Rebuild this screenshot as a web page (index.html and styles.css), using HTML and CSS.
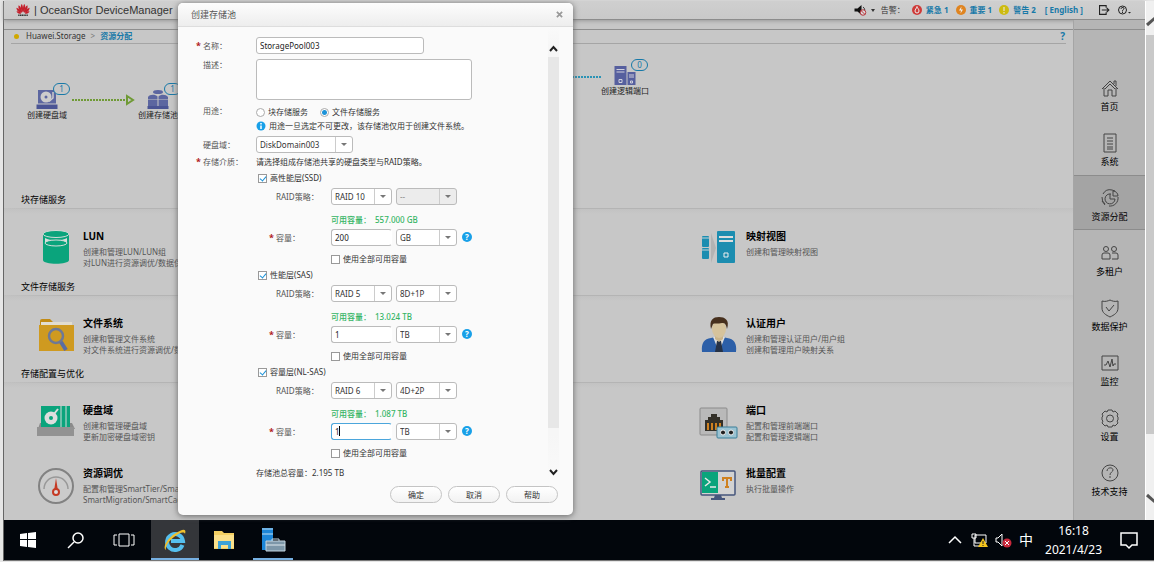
FILE: index.html
```html
<!DOCTYPE html>
<html lang="zh-CN">
<head>
<meta charset="utf-8">
<title>OceanStor DeviceManager</title>
<link rel="stylesheet" href="styles.css">
</head>
<body>
<div class="screen">
  <div class="viewport">
    <div class="app">
      <header class="topbar">
        <svg class="logo" viewBox="0 0 32 28" role="img" aria-label="HUAWEI">
          <g fill="#c4202c">
            <path d="M15 19C10 12 10 4 13 0c3 3 4 12 2 19z"/><path d="M17 19c5-7 5-15 2-19-3 3-4 12-2 19z"/>
            <path d="M14 20C7 16 4 9 6 3c4 2 8 9 8 17z"/><path d="M18 20c7-4 10-11 8-17-4 2-8 9-8 17z"/>
            <path d="M13 21C6 20 1 15 1 9c5 1 10 6 12 12z"/><path d="M19 21c7-1 12-6 12-12-5 1-10 6-12 12z"/>
            <path d="M12 22c-5 2-9 0-11-5 4-1 8 1 11 5z"/><path d="M20 22c5 2 9 0 11-5-4-1-8 1-11 5z"/>
          </g>
          <path d="M5 26h22" stroke="#333" stroke-width="3" stroke-dasharray="3 1"/>
        </svg>
        <h1 class="product">| OceanStor DeviceManager</h1>
        <div class="alarms">
          <svg class="sound" viewBox="0 0 26 24"><path d="M1 9h6l8-7v20l-8-7H1z" fill="#111"/><path d="M18 6c3 2 4 5 3 8" stroke="#333" stroke-width="2" fill="none"/><circle cx="18" cy="17" r="5.500" fill="#ddd" stroke="#b8323a" stroke-width="2"/><path d="M14 13l8 8" stroke="#b8323a" stroke-width="2"/></svg>
          <svg class="caret" viewBox="0 0 8 6"><path d="M0 0h8L4 6z" fill="#333"/></svg>
          <span class="alarm-label">告警：</span>
          <a class="alarm" href="#"><svg viewBox="0 0 20 20"><circle cx="10" cy="10" r="10" fill="#cf3a38"/><path d="M10 3c1 4 4 5 4 9a4 4 0 0 1-8 0c0-3 3-5 4-9z" fill="none" stroke="#eee" stroke-width="2"/></svg>紧急 1</a>
          <a class="alarm" href="#"><svg viewBox="0 0 20 20"><circle cx="10" cy="10" r="10" fill="#df8420"/><path d="M11 3l-5 8h4l-1 6 5-8h-4z" fill="#eee"/></svg>重要 1</a>
          <a class="alarm" href="#"><svg viewBox="0 0 20 20"><circle cx="10" cy="10" r="10" fill="#cdbb10"/><path d="M10 4v8M10 14v3" stroke="#eee" stroke-width="2"/></svg>警告 2</a>
          <a class="lang" href="#">[ English ]</a>
          <svg class="out" viewBox="0 0 20 18"><path d="M13 5V1H1v16h12v-4M5 9h12M14 5l4 4-4 4" fill="none" stroke="#222" stroke-width="2"/></svg>
          <svg class="ask" viewBox="0 0 26 20"><circle cx="9" cy="10" r="8" fill="none" stroke="#222" stroke-width="2"/><path d="M6 8c0-4 6-4 6-1 0 2-3 2-3 5M9 13v3" fill="none" stroke="#222" stroke-width="2"/><path d="M20 14h6l-3 3z" fill="#222"/></svg>
        </div>
      </header>

      <div class="workspace">
        <main class="content">
          <nav class="crumbs">
            <span class="dot"></span><span>Huawei.Storage</span><span class="gt">&gt;</span><a href="#">资源分配</a>
            <a class="crumb-help" href="#">?</a>
          </nav>

          <section class="flow">
            <div class="flow-start">
              <div class="node">
                <svg class="node-icon" viewBox="0 0 44 38"><path d="M4 0h36v27H4z" fill="#5c66a0"/><circle cx="20" cy="14" r="11" fill="#ccc"/><circle cx="20" cy="14" r="3" fill="#5c66a0"/><path d="M34 4v12l-8 7" stroke="#ccc" stroke-width="3" fill="none"/><path d="M1 29h42v9H1z" fill="#4a5494"/></svg>
                <span class="badge">1</span>
                <span class="node-name">创建硬盘域</span>
              </div>
              <svg class="arrow" viewBox="0 0 63 10"><path d="M1 5h55" stroke="#6f9a35" stroke-width="2" stroke-dasharray="2 1"/><path d="M56 1l6 4-6 4z" fill="#c7c7c7" stroke="#6f9a35" stroke-width="2"/></svg>
              <div class="node">
                <svg class="node-icon" viewBox="0 0 44 38"><ellipse cx="22" cy="4" rx="10" ry="4" fill="#5c66a0"/><path d="M2 19V14c3-6 15-6 19-1v6zM23 19v-6c4-5 15-5 19 1v5z" fill="#5c66a0"/><path d="M2 20h19v14H2zM23 20h19v14H23z" fill="#5c66a0"/><path d="M1 32h42v6H1z" fill="#4a5494"/></svg>
                <span class="badge">1</span>
                <span class="node-name">创建存储池</span>
              </div>
            </div>
            <div class="dots"></div>
            <div class="node">
              <svg class="node-icon" viewBox="0 0 44 38"><path d="M1 0h24v38H1zM27 12h16v26H27z" fill="#565f9e"/><path d="M5 7h16M5 12h16M30 18h10M30 22h10" stroke="#d0d0dc" stroke-width="2"/><path d="M10 27h6v6h-6zM33 30h4v4h-4z" fill="none" stroke="#d0d0dc" stroke-width="2"/></svg>
              <span class="badge">0</span>
              <span class="node-name">创建逻辑端口</span>
            </div>
          </section>

          <section class="group">
            <h2>块存储服务</h2>
            <div class="cards">
              <a class="card" href="#">
                <svg viewBox="0 0 40 40"><path d="M7 5v26c0 5 26 5 26 0V5z" fill="#0aa47c"/><ellipse cx="20" cy="5" rx="13" ry="3.500" fill="#0aa47c" stroke="#d2dcd8"/><path d="M9 9c5 3 17 3 22 0v5c-5 4-17 4-22 0z" fill="#d8dfdc"/><ellipse cx="20" cy="14" rx="11" ry="3" fill="#0aa47c" stroke="#d2dcd8"/></svg>
                <div><h3>LUN</h3><p>创建和管理LUN/LUN组<br>对LUN进行资源调优/数据保护</p></div>
              </a>
              <a class="card" href="#">
                <svg viewBox="0 0 40 40"><g fill="#1c8db0"><rect x="3" y="7" width="7" height="11" rx="1"/><rect x="3" y="19" width="7" height="11" rx="1"/><rect x="18" y="2" width="18" height="32" rx="1"/></g><path d="M12 4l5 15-5 15z" fill="#b3b3b3"/><path d="M3 9h7M3 21h7" stroke="#c7d4d8"/><path d="M20 8h14M20 12h14" stroke="#ddd" stroke-width="2"/><path d="M25 24h4v4h-4z" fill="none" stroke="#eee"/></svg>
                <div><h3>映射视图</h3><p>创建和管理映射视图</p></div>
              </a>
            </div>
          </section>

          <section class="group">
            <h2>文件存储服务</h2>
            <div class="cards">
              <a class="card" href="#">
                <svg viewBox="0 0 40 40"><path d="M4 16V5q0-2 2-2h8l3 3h19v10z" fill="#c28b14"/><path d="M5 6h31v5H5z" fill="#e2ddd0"/><path d="M3 9h35v26H3z" fill="#cf9a20"/><circle cx="20" cy="20" r="7" fill="#cf9a20" stroke="#6e7896" stroke-width="2.500"/><path d="M25 26l5 8" stroke="#5b6da3" stroke-width="4"/></svg>
                <div><h3>文件系统</h3><p>创建和管理文件系统<br>对文件系统进行资源调优/数据保护</p></div>
              </a>
              <a class="card" href="#">
                <svg viewBox="0 0 40 40"><path d="M3 36c-1-9 2-13 9-14l8-2 8 2c7 1 10 5 9 14z" fill="#2c5fa8"/><path d="M14 21l6 15 6-15z" fill="#ddd"/><path d="M18 25h4l2 11h-8z" fill="#263246"/><path d="M16 17h8v6l-4 3-4-3z" fill="#c9b48a"/><ellipse cx="20" cy="13" rx="7" ry="9" fill="#d6c39c"/><path d="M12 13C10 4 14 1 20 1s11 3 8 12c-1-5-2-6-5-6-4 1-8 0-9 1z" fill="#47301d"/></svg>
                <div><h3>认证用户</h3><p>创建和管理认证用户/用户组<br>创建和管理用户映射关系</p></div>
              </a>
            </div>
          </section>

          <section class="group">
            <h2>存储配置与优化</h2>
            <div class="cards">
              <a class="card" href="#">
                <svg viewBox="0 0 40 40"><path d="M4 20L2 26h37l-3-6z" fill="#8a8a8a"/><path d="M5 3h29v21H5z" fill="#0aa47c"/><path d="M25 3v21M30 3v21" stroke="#d5dcd9"/><circle cx="15" cy="15" r="6.500" fill="#ddd"/><circle cx="15" cy="15" r="2" fill="#0aa47c"/><path d="M18 11l4-5" stroke="#ddd" stroke-width="2"/><path d="M1 24h37v9H1z" fill="#929292"/></svg>
                <div><h3>硬盘域</h3><p>创建和管理硬盘域<br>更新加密硬盘域密钥</p></div>
              </a>
              <a class="card" href="#">
                <svg viewBox="0 0 40 40"><rect x="1" y="5" width="27" height="27" rx="1" fill="#b9b9b9" stroke="#8b8b8b"/><path d="M6 28V17h3v-3h3v-3h6v3h3v3h3v11z" fill="#333028"/><path d="M9 20v7M13 20v7M17 20v7M21 20v7" stroke="#cf8120" stroke-width="2"/><rect x="18" y="24" width="20" height="11" rx="1" fill="#9bc3d2" stroke="#3b7f99"/><circle cx="24" cy="29.500" r="2.500" fill="#222" stroke="#eee"/><circle cx="32" cy="29.500" r="2.500" fill="#222" stroke="#eee"/></svg>
                <div><h3>端口</h3><p>配置和管理前端端口<br>配置和管理逻辑端口</p></div>
              </a>
              <a class="card" href="#">
                <svg viewBox="0 0 40 40"><circle cx="20" cy="20" r="17" fill="#cbcbcb" stroke="#828282" stroke-width="2"/><path d="M8 23a12 12 0 1 1 24 0" fill="none" stroke="#989898" stroke-width="1.500"/><path d="M20 12l2 13h-4z" fill="#c53a24"/><circle cx="20" cy="26" r="3" fill="#ddd" stroke="#c53a24" stroke-width="2"/></svg>
                <div><h3>资源调优</h3><p>配置和管理SmartTier/SmartQoS<br>SmartMigration/SmartCache</p></div>
              </a>
              <a class="card" href="#">
                <svg viewBox="0 0 40 40"><rect x="2" y="5" width="34" height="24" rx="1" fill="#d2d2d2" stroke="#46567c" stroke-width="1.500"/><path d="M3 6h16v21H3z" fill="#0aa47c"/><path d="M6 12l5 4-5 4M11 21h6" fill="none" stroke="#e8e8e8" stroke-width="1.500"/><path d="M24 15v-3h8v3M28 12v9M26 21h4" fill="none" stroke="#cf8120" stroke-width="2"/><path d="M16 29h6l1 3h3v2H12v-2h3z" fill="#46567c"/></svg>
                <div><h3>批量配置</h3><p>执行批量操作</p></div>
              </a>
            </div>
          </section>
        </main>

        <nav class="side">
          <div class="side-items">
            <a href="#"><svg viewBox="0 0 20 20"><path d="M2 11l8-8 8 8M4 10v8h4v-6h4v6h4v-8M14 6V3h2v5M5 11l5-5 5 5"/></svg>首页</a>
            <a href="#"><svg viewBox="0 0 20 20"><path d="M4 1h12v18H4zM7 5h6M7 8h6M7 11h6M7 14h6M7 16h6"/></svg>系统</a>
            <a href="#" class="on"><svg viewBox="0 0 20 20"><path d="M3 6a8 8 0 0 1 9-4M18 9a8 8 0 0 1-9 9M2 9a8 8 0 0 0 3 7M11 6a5 5 0 1 0 4 5h-5V6M13 3v5h5a5 5 0 0 0-5-5M2 13l3 4M12 2l3 1"/></svg>资源分配</a>
            <a href="#"><svg viewBox="0 0 20 20"><circle cx="6" cy="6" r="2.500"/><circle cx="14" cy="6" r="2.500"/><path d="M2 16v-4q0-2 2-2h4q2 0 2 2v4zM12 10h4q2 0 2 2v4h-6"/></svg>多租户</a>
            <a href="#"><svg viewBox="0 0 20 20"><path d="M2 3c3 1 6 0 8-1 2 1 5 2 8 1v7c0 5-4 7-8 9-4-2-8-4-8-9zM6 9l3 4 5-6"/></svg>数据保护</a>
            <a href="#"><svg viewBox="0 0 20 20"><path d="M2 3h16v14H2zM4 12h2l2-4 2 6 2-8 1 7 1-2h2"/></svg>监控</a>
            <a href="#"><svg viewBox="0 0 20 20"><path d="M8 2h4l1 2 2-1 3 3-1 2 1 1v3l-1 1 1 2-3 3-2-1-1 2H8l-1-2-2 1-3-3 1-2-1-1V9l1-1-1-2 3-3 2 1z"/><circle cx="10" cy="10.500" r="3.500"/></svg>设置</a>
            <a href="#"><svg viewBox="0 0 20 20"><circle cx="10" cy="10" r="8"/><path d="M7 8c0-4 6-4 6-1 0 2-3 2-3 5M10 13v2"/></svg>技术支持</a>
          </div>
        </nav>
      </div>
    </div>

    <div class="page-scroll">
      <svg viewBox="0 0 8 34"><path d="M1 24l8-7" stroke="#555" stroke-width="3"/></svg>
      <div class="page-thumb"></div>
      <svg viewBox="0 0 8 34"><path d="M1 9l8 7" stroke="#555" stroke-width="3"/></svg>
    </div>

    <form class="dialog" role="dialog" aria-labelledby="dlg-title">
      <div class="dlg-head">
        <h2 id="dlg-title">创建存储池</h2>
        <button type="button" class="close" aria-label="关闭"><svg viewBox="0 0 8 8"><path d="M1 1l6 6M7 1L1 7" stroke="#999" stroke-width="2"/></svg></button>
      </div>
      <div class="dlg-body">
        <div class="fields">
          <div class="row roomy">
            <label class="req" for="name">名称：</label>
            <input class="box name" id="name" type="text" value="StoragePool003">
          </div>
          <div class="row roomy">
            <label for="desc">描述：</label>
            <textarea class="box desc" id="desc"></textarea>
          </div>
          <div class="row">
            <span class="lbl">用途：</span>
            <div>
              <div class="radios">
                <label><input type="radio" name="use">块存储服务</label>
                <label><input type="radio" name="use" checked>文件存储服务</label>
              </div>
              <p class="info"><svg viewBox="0 0 20 20"><circle cx="10" cy="10" r="9" fill="#18a0e8"/><path d="M10 4v3M10 9v7" stroke="#fff" stroke-width="3"/></svg>用途一旦选定不可更改，该存储池仅用于创建文件系统。</p>
            </div>
          </div>
          <div class="row">
            <label for="domain">硬盘域：</label>
            <span class="pick wide"><select id="domain"><option>DiskDomain003</option></select></span>
          </div>
          <div class="row">
            <span class="lbl req">存储介质：</span>
            <span class="hint">请选择组成存储池共享的硬盘类型与RAID策略。</span>
          </div>

          <fieldset class="tier">
            <label class="check tier-name"><input type="checkbox" checked>高性能层(SSD)</label>
            <div class="pair">
              <label for="raid1">RAID策略：</label>
              <span class="pick"><select id="raid1"><option>RAID 10</option></select></span>
              <span class="pick off"><select disabled aria-label="RAID组合"><option>--</option></select></span>
            </div>
            <p class="avail"><span>可用容量：</span>557.000 GB</p>
            <div class="pair">
              <label class="req" for="cap1">容量：</label>
              <span class="cap"><input class="box" id="cap1" type="text" value="200"></span>
              <span class="pick"><select aria-label="单位"><option>GB</option></select></span>
              <button type="button" class="help" aria-label="帮助">?</button>
            </div>
            <label class="check all"><input type="checkbox">使用全部可用容量</label>
          </fieldset>

          <fieldset class="tier">
            <label class="check tier-name"><input type="checkbox" checked>性能层(SAS)</label>
            <div class="pair">
              <label for="raid2">RAID策略：</label>
              <span class="pick"><select id="raid2"><option>RAID 5</option></select></span>
              <span class="pick"><select aria-label="RAID组合"><option>8D+1P</option></select></span>
            </div>
            <p class="avail"><span>可用容量：</span>13.024 TB</p>
            <div class="pair">
              <label class="req" for="cap2">容量：</label>
              <span class="cap"><input class="box" id="cap2" type="text" value="1"></span>
              <span class="pick"><select aria-label="单位"><option>TB</option></select></span>
              <button type="button" class="help" aria-label="帮助">?</button>
            </div>
            <label class="check all"><input type="checkbox">使用全部可用容量</label>
          </fieldset>

          <fieldset class="tier">
            <label class="check tier-name"><input type="checkbox" checked>容量层(NL-SAS)</label>
            <div class="pair">
              <label for="raid3">RAID策略：</label>
              <span class="pick"><select id="raid3"><option>RAID 6</option></select></span>
              <span class="pick"><select aria-label="RAID组合"><option>4D+2P</option></select></span>
            </div>
            <p class="avail"><span>可用容量：</span>1.087 TB</p>
            <div class="pair">
              <label class="req" for="cap3">容量：</label>
              <span class="cap active"><input class="box" id="cap3" type="text" value="1"></span>
              <span class="pick"><select aria-label="单位"><option>TB</option></select></span>
              <button type="button" class="help" aria-label="帮助">?</button>
            </div>
            <label class="check all"><input type="checkbox">使用全部可用容量</label>
          </fieldset>

          <p class="total">存储池总容量：2.195 TB</p>
        </div>
        <div class="dlg-scroll">
          <svg viewBox="0 0 11 8"><path d="M2 6l3.500-4L9 6" fill="none" stroke="#222" stroke-width="2"/></svg>
          <div class="dlg-thumb"></div>
          <svg viewBox="0 0 11 8"><path d="M2 2l3.500 4L9 2" fill="none" stroke="#222" stroke-width="2"/></svg>
        </div>
      </div>
      <div class="dlg-foot">
        <button type="button">确定</button>
        <button type="button">取消</button>
        <button type="button">帮助</button>
      </div>
    </form>
  </div>

  <footer class="taskbar">
    <div class="apps">
      <button aria-label="开始"><svg viewBox="0 0 24 24"><path d="M4 6l7-1v6H4zM12 5l8-1v7h-8zM4 12h7v7l-7-1zM12 12h8v8l-8-1z" fill="#fff"/></svg></button>
      <button aria-label="搜索"><svg viewBox="0 0 24 24"><circle cx="14" cy="10" r="5" fill="none" stroke="#fff" stroke-width="1.500"/><path d="M10 14l-6 6" stroke="#fff" stroke-width="1.500"/></svg></button>
      <button aria-label="任务视图"><svg viewBox="0 0 24 24"><path d="M7 6h10v12H7zM5 7H2v10h3M19 7h3v10h-3" fill="none" stroke="#fff"/></svg></button>
    </div>
    <div class="apps pinned">
      <button class="current" aria-label="Internet Explorer"><svg viewBox="0 0 24 24"><path d="M19.500 17A8 8 0 1 1 20 13H8" fill="none" stroke="#55bfee" stroke-width="4"/><path d="M3 22C-1 20 4 10 13 5c6-4 11-5 9 1-1-3-6-1-11 3-5 4-9 9-8 13z" fill="#efbf2c"/></svg></button>
      <button aria-label="文件资源管理器"><svg viewBox="0 0 24 24"><path d="M2 3h8l2 2h10v16H2z" fill="#f3cf62"/><path d="M2 7h20v13H2z" fill="#fbe08a"/><path d="M6 13h13v8h-3v-4H9v4H6z" fill="#3da2d8"/></svg></button>
      <button class="running" aria-label="服务器管理器"><svg viewBox="0 0 24 24"><path d="M1 0h11v22H1z" fill="#1c86d8"/><path d="M1 6h11M1 1h11" stroke="#bfe0f5"/><path d="M11 13v-2h7v2" fill="none" stroke="#c3d4df"/><path d="M5 13h19v10H5z" fill="#7d97a9" stroke="#c3d4df"/><path d="M5 17h19" stroke="#dfe8ee"/></svg></button>
    </div>
    <div class="tray">
      <svg viewBox="0 0 16 16"><path d="M2 11l6-6 6 6" fill="none" stroke="#fff" stroke-width="1.500"/></svg>
      <svg viewBox="0 0 16 16"><path d="M4 3h11v8H4zM1 2h4v4H1zM3 6v8h5" fill="none" stroke="#fff"/><path d="M12 6l5 9H7z" fill="#f5c51c"/><path d="M12 9v3M12 13v1" stroke="#222"/></svg>
      <svg viewBox="0 0 16 16"><path d="M1 6h2l4-4v12l-4-4H1z" fill="none" stroke="#fff"/><circle cx="12" cy="11" r="4.500" fill="#c9283c"/><path d="M10 9l4 4M14 9l-4 4" stroke="#fff"/></svg>
      <span class="ime">中</span>
      <div class="clock"><span>16:18</span><span>2021/4/23</span></div>
      <svg class="notice" viewBox="0 0 18 18"><path d="M1 2h16v12h-5l-3 3-3-3H1z" fill="none" stroke="#fff" stroke-width="1.500"/></svg>
    </div>
  </footer>
</div>
</body>
</html>
```
FILE: styles.css
```css
*, *::before, *::after { box-sizing: border-box; }

body {
  margin: 0;
  background: #e6e6e6;
  color: #333;
  font: 8px/12px "Noto Sans", "Noto Sans CJK SC", sans-serif;
}

h1, h2, h3, p { margin: 0; font-weight: normal; }
a { color: inherit; text-decoration: none; }
svg { display: block; flex: none; overflow: visible; }
input, select, textarea, button { font: inherit; color: inherit; margin: 0; }
button { border: 0; padding: 0; background: none; }

.screen {
  display: flex;
  flex-direction: column;
  min-height: 100vh;
  padding: 1px 0 1px 3px;
}

.viewport {
  position: relative;
  display: flex;
  flex: 1;
  border-left: 1px solid #666;
}

.app {
  display: flex;
  flex: 1;
  flex-direction: column;
  background: #c7c7c7;
}

/* top bar */
.topbar {
  display: flex;
  align-items: center;
  height: 19px;
  padding: 0 14px 0 12px;
  background: linear-gradient(#cfcfcf, #c9c9c9);
  border-bottom: 1px solid #8c8c8c;
  box-shadow: 0 1px 4px #999;
}
.logo { width: 14px; height: 14px; }
.product {
  margin-left: 4px;
  color: #333;
  font: 11px/16px "Liberation Sans", Arial, sans-serif;
}
.alarms { display: flex; align-items: center; margin-left: auto; }
.sound { width: 13px; height: 12px; }
.caret { width: 4px; height: 3px; margin: 0 6px 0 4px; }
.alarm-label { margin-right: 7px; }
.alarm {
  display: flex;
  align-items: center;
  gap: 4px;
  margin-right: 7px;
  color: #1779a8;
  font-weight: bold;
}
.alarm svg { width: 10px; height: 10px; }
.lang { margin: 0 16px 0 2px; color: #1779a8; font-weight: bold; }
.out { width: 11px; height: 10px; margin-right: 8px; }
.ask { width: 13px; height: 10px; }

.workspace { display: flex; flex: 1; }

/* main column */
.content {
  flex: 1;
  padding-top: 9px;
  min-width: 0;
}
.crumbs {
  display: flex;
  align-items: center;
  gap: 5px;
  height: 15px;
  padding: 0 8px 2px 10px;
  border-top: 1px solid #8e8e8e;
  background: linear-gradient(#a5a5a5, #a5a5a5) 7px 100% / calc(100% - 14px) 1px no-repeat;
}
.crumbs a { color: #1779a8; font-weight: bold; }
.crumbs .gt { color: #777; }
.crumbs .crumb-help { margin-left: auto; font-size: 10px; }
.dot { width: 5px; height: 5px; margin-right: 2px; border-radius: 50%; background: #d0a800; }

/* flow */
.flow {
  display: flex;
  align-items: flex-start;
  padding: 15px 19px 88px;
}
.flow-start { display: flex; padding-top: 24px; margin-bottom: -17px; }
.node {
  position: relative;
  display: flex;
  flex-direction: column;
  align-items: center;
  width: 48px;
  padding-top: 7px;
}
.node-icon { width: 22px; height: 19px; }
.node-name { color: #222; line-height: 12px; white-space: nowrap; }
.badge {
  position: absolute;
  top: 0;
  left: 30px;
  width: 17px;
  height: 12px;
  border: 1px solid #1779a8;
  border-radius: 6px;
  background: #c7c7c7;
  color: #1779a8;
  line-height: 10px;
  text-align: center;
}
.arrow { width: 63px; height: 10px; margin-top: 12px; }
.dots {
  width: 419px;
  height: 2px;
  margin-top: 17px;
  background: repeating-linear-gradient(90deg, #2a93b5 0 2px, transparent 2px 3px);
}

/* service groups */
.group h2 {
  padding-left: 17px;
  color: #000;
  font-size: 9px;
  line-height: 16px;
}
.cards {
  display: grid;
  grid-template-columns: 663px 1fr;
  row-gap: 24px;
  padding: 21px 0 11px 32px;
  background: linear-gradient(90deg, transparent 0, #b4b4b4 60px, #b4b4b4 90%, transparent 98%) 0 0 / 100% 1px no-repeat,
    linear-gradient(#c1c1c1, #c7c7c7 6px);
}
.card { display: flex; gap: 7px; white-space: nowrap; }
.card svg { width: 40px; height: 40px; margin-bottom: -1px; }
.card h3 { color: #000; font-size: 10px; font-weight: bold; line-height: 14px; }
.card p { margin-top: 3px; color: #555; line-height: 11px; }

/* right navigation */
.side {
  width: 72px;
  padding-top: 9px;
  border-left: 1px solid #a5a5a5;
  background: #b5b5b5;
}
.side-items { padding-top: 35px; border-top: 1px solid #8e8e8e; }
.side a {
  display: flex;
  flex-direction: column;
  align-items: center;
  gap: 2px;
  height: 55px;
  padding-top: 13px;
  color: #000;
  font-size: 9px;
  line-height: 14px;
}
.side svg { width: 20px; height: 20px; fill: none; stroke: #444; stroke-width: 1; }
.side .on { background: #a4a4a4; border-top: 1px solid #8c8c8c; border-bottom: 1px solid #8c8c8c; padding-top: 12px; }

/* page scrollbar */
.page-scroll {
  display: flex;
  flex-direction: column;
  width: 9px;
  overflow: hidden;
  border-left: 1px solid #fff;
  background: #f0f0f0;
}
.page-scroll svg { width: 8px; height: 34px; }
.page-thumb { flex: 1; margin-bottom: 52px; background: #c9c9c9; }

/* dialog */
.dialog {
  position: absolute;
  top: 2px;
  left: 174px;
  width: 395px;
  border-radius: 5px;
  background: #fafafa;
  box-shadow: 0 1px 6px #666;
}
.dlg-head {
  display: flex;
  align-items: center;
  justify-content: space-between;
  height: 24px;
  padding: 0 10px 0 13px;
  border-bottom: 1px solid #ddd;
  border-radius: 5px 5px 0 0;
  background: linear-gradient(#fdfdfd, #ededed);
}
.dlg-head h2 { color: #555; font-size: 9px; line-height: 14px; }
.close svg { width: 7px; height: 7px; }
.dlg-body { display: flex; padding: 0 14px 0 18px; }
.fields { display: flex; flex: 1; flex-direction: column; gap: 3px; padding-top: 10px; }
.row { display: grid; grid-template-columns: 60px 1fr; }
.roomy { margin-bottom: 2px; }
.row > label, .row > .lbl {
  position: relative;
  padding-left: 7px;
  color: #555;
}
.row > label { padding-top: 3px; }
.row > label[for="desc"] { padding-top: 0; }
.req::before { content: "*"; position: absolute; margin-left: -7px; color: #b01820; font-size: 9px; font-weight: bold; }

.box {
  display: block;
  height: 17px;
  padding: 0 3px;
  border: 1px solid #bbb;
  border-radius: 3px;
  outline: 0;
  background: #fff;
  color: #222;
}
.name { width: 168px; }
.desc { width: 216px; height: 41px; resize: none; }

.radios { display: flex; gap: 12px; }
.radios label, .check { display: flex; align-items: center; gap: 3px; line-height: 14px; }
.radios input {
  appearance: none;
  width: 9px;
  height: 9px;
  border: 1px solid #aaa;
  border-radius: 50%;
  background: #fff;
}
.radios input:checked { background: radial-gradient(circle, #1d93d8 2px, #fff 3px); }
.info { display: flex; align-items: center; gap: 3px; line-height: 14px; }
.info svg { width: 10px; height: 10px; }

.pick { position: relative; display: block; width: 61px; height: 17px; }
.pick.wide { width: 97px; }
.pick select {
  appearance: none;
  display: block;
  width: 100%;
  height: 17px;
  padding: 0 18px 0 3px;
  border: 1px solid #bbb;
  border-radius: 3px;
  background: linear-gradient(#ccc, #ccc) calc(100% - 16px) 0 / 1px 100% no-repeat, #fff;
  color: #333;
  opacity: 1;
}
.pick.off select { background-color: #ececec; color: #888; }
.pick::after {
  content: "";
  position: absolute;
  top: 7px;
  right: 6px;
  border: 3px solid transparent;
  border-top-color: #777;
  border-bottom: 0;
}

.tier { min-width: 0; margin: 0 0 -1px; padding: 0 0 0 60px; border: 0; }
.check input {
  appearance: none;
  position: relative;
  width: 9px;
  height: 9px;
  border: 1px solid #999;
  background: #fff;
}
.check input:checked::after {
  content: "";
  position: absolute;
  top: 0;
  left: 2px;
  width: 4px;
  height: 6px;
  border: solid #1d93d8;
  border-width: 0 1px 1px 0;
  transform: rotate(40deg);
}
.tier-name { margin-bottom: 3px; padding-left: 2px; }
.pair { display: grid; grid-template-columns: 71px 61px 61px 11px; column-gap: 4px; }
.pair > label { padding: 3px 0 0 20px; color: #555; }
.avail { display: flex; gap: 4px; margin: 8px 0 2px; padding-left: 75px; color: #35b565; font-weight: 500; line-height: 14px; }
.cap { position: relative; }
.cap .box { width: 61px; border-right-color: transparent; }
.cap.active .box { border-color: #4ba6dc transparent #4ba6dc #4ba6dc; }
.cap.active::after { content: ""; position: absolute; top: 3px; left: 8px; width: 1px; height: 10px; background: #000; }
.help {
  width: 10px;
  height: 10px;
  margin: 3px 0 0 1px;
  border-radius: 50%;
  background: #18a0e8;
  color: #fff;
  font-weight: bold;
  line-height: 10px;
}
.all { margin-top: 6px; padding-left: 75px; }
.total { margin-top: 4px; padding-left: 60px; line-height: 14px; }

.dlg-scroll {
  display: flex;
  flex-direction: column;
  width: 11px;
  padding: 18px 0 4px;
  background: linear-gradient(#fafafa, #f6f6f6 20px, #f6f6f6 90%, #fafafa);
}
.dlg-scroll svg { width: 11px; height: 8px; }
.dlg-thumb { flex: 1; margin: 4px 0 40px; background: #e7e7e7; }

.dlg-foot {
  display: flex;
  justify-content: flex-end;
  gap: 6px;
  padding: 6px 15px 12px;
}
.dlg-foot button {
  width: 52px;
  height: 17px;
  border: 1px solid #c4c4c4;
  border-radius: 9px;
  background: linear-gradient(#fff, #f2f2f2);
  line-height: 14px;
}

/* taskbar */
.taskbar {
  display: flex;
  align-items: center;
  height: 41px;
  border-bottom: 1px solid #777;
  border-left: 1px solid #666;
  background: #02060c;
  color: #fff;
}
.apps { display: flex; height: 40px; }
.pinned { gap: 1px; margin-left: 3px; }
.apps button { display: flex; align-items: center; justify-content: center; width: 48px; }
.apps svg { width: 24px; height: 24px; }
.current { background: #34363a; box-shadow: inset 0 -2px #76b0e2; }
.running { background: linear-gradient(#76b0e2, #76b0e2) 50% 100% / 40px 2px no-repeat; }
.tray { display: flex; align-items: center; gap: 8px; margin-left: auto; padding-right: 16px; }
.tray svg { width: 16px; height: 16px; }
.ime { font-size: 14px; line-height: 20px; }
.clock {
  display: flex;
  flex-direction: column;
  align-items: center;
  margin: 0 10px 0 4px;
  font-size: 12px;
  line-height: 19px;
}
.tray .notice { width: 18px; height: 18px; }
```
